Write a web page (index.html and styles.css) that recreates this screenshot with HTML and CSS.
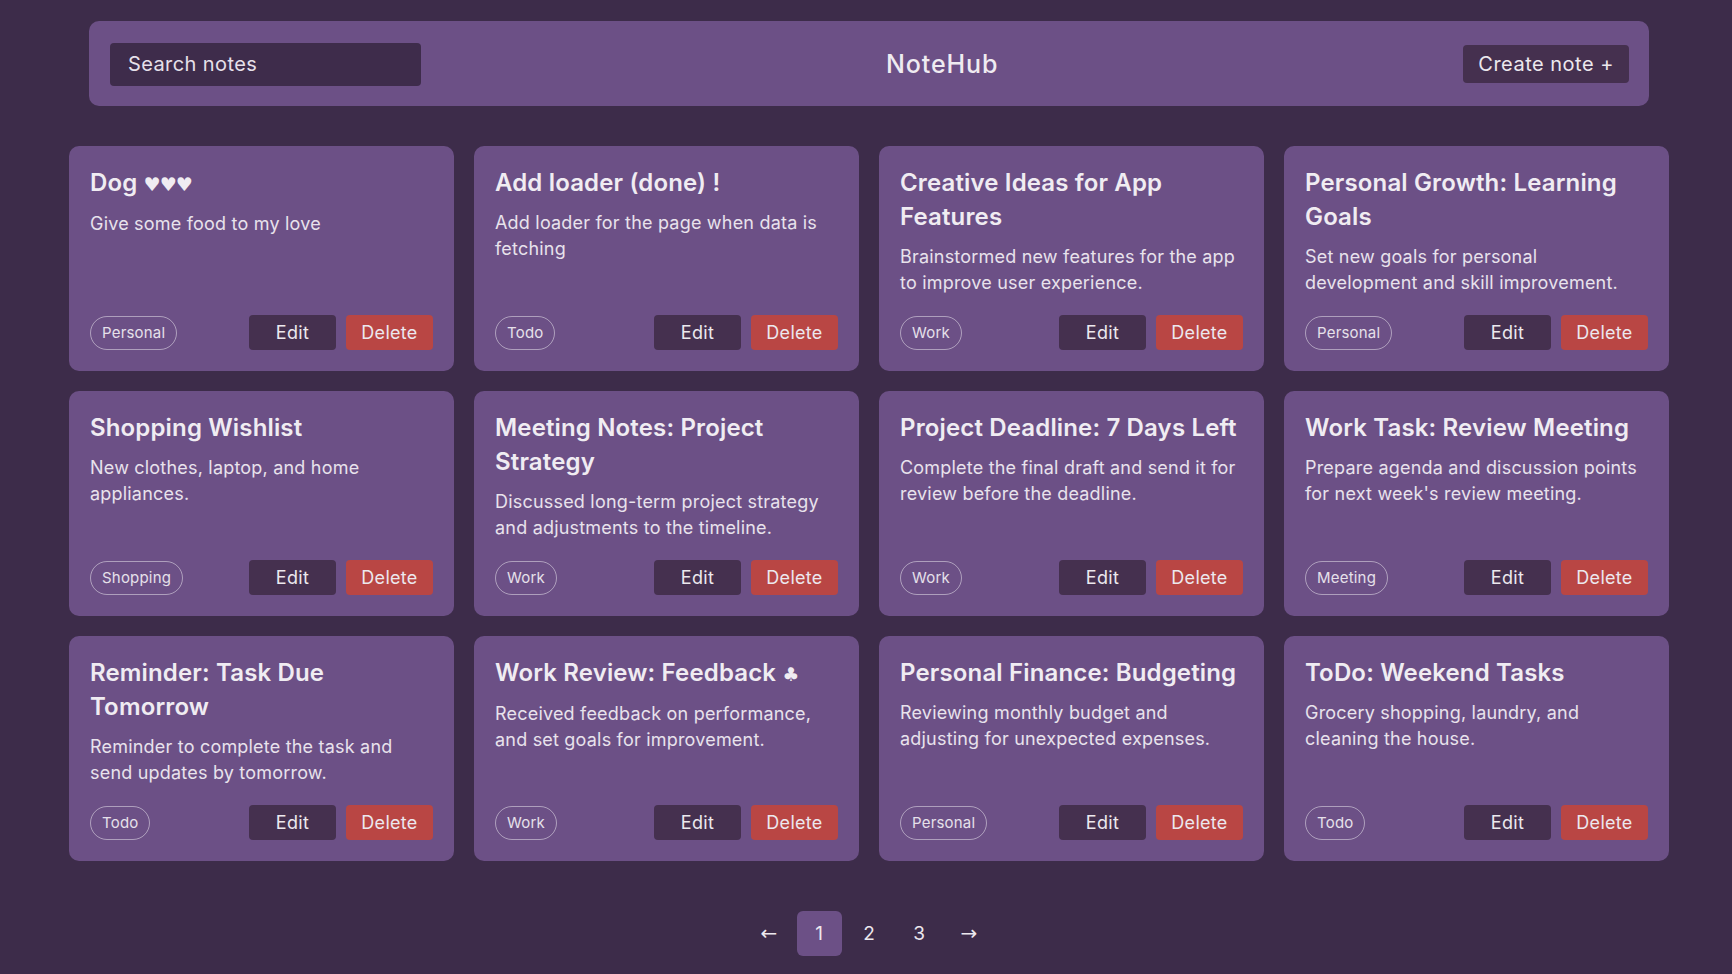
FILE: index.html
```html
<!DOCTYPE html>
<html lang="en">
<head>
<meta charset="utf-8">
<title>NoteHub</title>
<link rel="stylesheet" href="styles.css">
</head>
<body>
<div class="app">
  <header class="topbar">
    <input class="search" type="text" placeholder="Search notes">
    <h1 class="brand">NoteHub</h1>
    <button class="create">Create note +</button>
  </header>

  <main class="grid">
    <article class="card">
      <h2 class="title">Dog <span class="sym">♥♥♥</span></h2>
      <p class="desc">Give some food to my love</p>
      <div class="foot"><span class="tag">Personal</span><div class="actions"><button class="btn edit">Edit</button><button class="btn del">Delete</button></div></div>
    </article>
    <article class="card">
      <h2 class="title">Add loader (done) !</h2>
      <p class="desc">Add loader for the page when data is fetching</p>
      <div class="foot"><span class="tag">Todo</span><div class="actions"><button class="btn edit">Edit</button><button class="btn del">Delete</button></div></div>
    </article>
    <article class="card">
      <h2 class="title">Creative Ideas for App Features</h2>
      <p class="desc">Brainstormed new features for the app to improve user experience.</p>
      <div class="foot"><span class="tag">Work</span><div class="actions"><button class="btn edit">Edit</button><button class="btn del">Delete</button></div></div>
    </article>
    <article class="card">
      <h2 class="title">Personal Growth: Learning Goals</h2>
      <p class="desc">Set new goals for personal development and skill improvement.</p>
      <div class="foot"><span class="tag">Personal</span><div class="actions"><button class="btn edit">Edit</button><button class="btn del">Delete</button></div></div>
    </article>

    <article class="card">
      <h2 class="title">Shopping Wishlist</h2>
      <p class="desc">New clothes, laptop, and home appliances.</p>
      <div class="foot"><span class="tag">Shopping</span><div class="actions"><button class="btn edit">Edit</button><button class="btn del">Delete</button></div></div>
    </article>
    <article class="card">
      <h2 class="title">Meeting Notes: Project Strategy</h2>
      <p class="desc">Discussed long-term project strategy and adjustments to the timeline.</p>
      <div class="foot"><span class="tag">Work</span><div class="actions"><button class="btn edit">Edit</button><button class="btn del">Delete</button></div></div>
    </article>
    <article class="card">
      <h2 class="title">Project Deadline: 7 Days Left</h2>
      <p class="desc">Complete the final draft and send it for review before the deadline.</p>
      <div class="foot"><span class="tag">Work</span><div class="actions"><button class="btn edit">Edit</button><button class="btn del">Delete</button></div></div>
    </article>
    <article class="card">
      <h2 class="title">Work Task: Review Meeting</h2>
      <p class="desc">Prepare agenda and discussion points for next week's review meeting.</p>
      <div class="foot"><span class="tag">Meeting</span><div class="actions"><button class="btn edit">Edit</button><button class="btn del">Delete</button></div></div>
    </article>

    <article class="card">
      <h2 class="title">Reminder: Task Due Tomorrow</h2>
      <p class="desc">Reminder to complete the task and send updates by tomorrow.</p>
      <div class="foot"><span class="tag">Todo</span><div class="actions"><button class="btn edit">Edit</button><button class="btn del">Delete</button></div></div>
    </article>
    <article class="card">
      <h2 class="title">Work Review: Feedback <span class="sym">♣</span></h2>
      <p class="desc">Received feedback on performance, and set goals for improvement.</p>
      <div class="foot"><span class="tag">Work</span><div class="actions"><button class="btn edit">Edit</button><button class="btn del">Delete</button></div></div>
    </article>
    <article class="card">
      <h2 class="title">Personal Finance: Budgeting</h2>
      <p class="desc">Reviewing monthly budget and adjusting for unexpected expenses.</p>
      <div class="foot"><span class="tag">Personal</span><div class="actions"><button class="btn edit">Edit</button><button class="btn del">Delete</button></div></div>
    </article>
    <article class="card">
      <h2 class="title">ToDo: Weekend Tasks</h2>
      <p class="desc">Grocery shopping, laundry, and cleaning the house.</p>
      <div class="foot"><span class="tag">Todo</span><div class="actions"><button class="btn edit">Edit</button><button class="btn del">Delete</button></div></div>
    </article>
  </main>

  <nav class="pager">
    <a class="page arrow">←</a>
    <a class="page active">1</a>
    <a class="page">2</a>
    <a class="page">3</a>
    <a class="page arrow">→</a>
  </nav>
</div>
</body>
</html>
```
FILE: styles.css
```css
* { box-sizing: border-box; }

html, body {
  margin: 0;
  padding: 0;
  background: #3d2c4a;
}

body {
  font-family: Inter, "DejaVu Sans", sans-serif;
  color: #ece8ee;
  min-height: 974px;
}

.app {
  width: 1600px;
  margin: 0 63px 0 69px;
  padding-top: 21px;
}

.topbar {
  margin: 0 20px;
  height: 85px;
  background: #6c5086;
  border-radius: 10px;
  padding: 0 20px 0 21px;
  display: flex;
  align-items: center;
  justify-content: space-between;
}

.search {
  width: 311px;
  height: 43px;
  border: none;
  outline: none;
  border-radius: 4px;
  background: #3e2c4b;
  color: #ece8ee;
  font-family: inherit;
  font-size: 20px;
  letter-spacing: 0.4px;
  padding: 0 18px;
  margin-top: 1px;
}

.search::placeholder {
  color: #e6e0ea;
  opacity: 1;
}

.brand {
  margin: 0;
  font-size: 25px;
  font-weight: 500;
  letter-spacing: 0.9px;
  color: #efebf1;
}

.create {
  height: 38px;
  padding: 0 15px;
  border: none;
  border-radius: 4px;
  background: #45304f;
  color: #ece8ee;
  font-family: inherit;
  font-size: 20px;
  letter-spacing: 0.5px;
}

.grid {
  margin-top: 40px;
  display: grid;
  grid-template-columns: repeat(4, 385px);
  gap: 20px;
}

.card {
  background: #6c5086;
  border-radius: 10px;
  padding: 20px 21px 21px 21px;
  display: flex;
  flex-direction: column;
  min-height: 225px;
}

.title {
  margin: 0;
  font-size: 24px;
  line-height: 34px;
  font-weight: 600;
  color: #f0ecf2;
  letter-spacing: 0.15px;
}

.sym {
  font-family: "DejaVu Sans", sans-serif;
  font-size: 19px;
  letter-spacing: -1px;
}

.desc {
  margin: 10px 0 0;
  font-size: 18px;
  line-height: 26px;
  color: #e8e2ec;
  letter-spacing: 0.2px;
}

.foot {
  margin-top: auto;
  padding-top: 19px;
  display: flex;
  align-items: center;
  justify-content: space-between;
}

.tag {
  height: 34px;
  display: inline-flex;
  align-items: center;
  padding: 0 11px;
  border: 1px solid rgba(255, 255, 255, 0.45);
  border-radius: 17px;
  font-size: 15px;
  letter-spacing: 0.2px;
  color: #e6e0ea;
}

.actions {
  display: flex;
  gap: 10px;
}

.btn {
  min-width: 87px;
  height: 35px;
  padding: 0 15px;
  border: none;
  border-radius: 4px;
  font-family: inherit;
  font-size: 18px;
  letter-spacing: 0.3px;
  color: #ece8ee;
}

.edit { background: #45304f; }
.del { background: #b94644; }

.pager {
  margin-top: 50px;
  display: flex;
  justify-content: center;
  gap: 5px;
}

.page {
  width: 45px;
  height: 45px;
  display: flex;
  align-items: center;
  justify-content: center;
  border-radius: 6px;
  font-size: 19px;
  color: #ece8ee;
}

.page.arrow {
  font-family: "DejaVu Sans", sans-serif;
  font-size: 20px;
  padding-bottom: 2px;
}

.page.active { background: #6c5086; }
```
